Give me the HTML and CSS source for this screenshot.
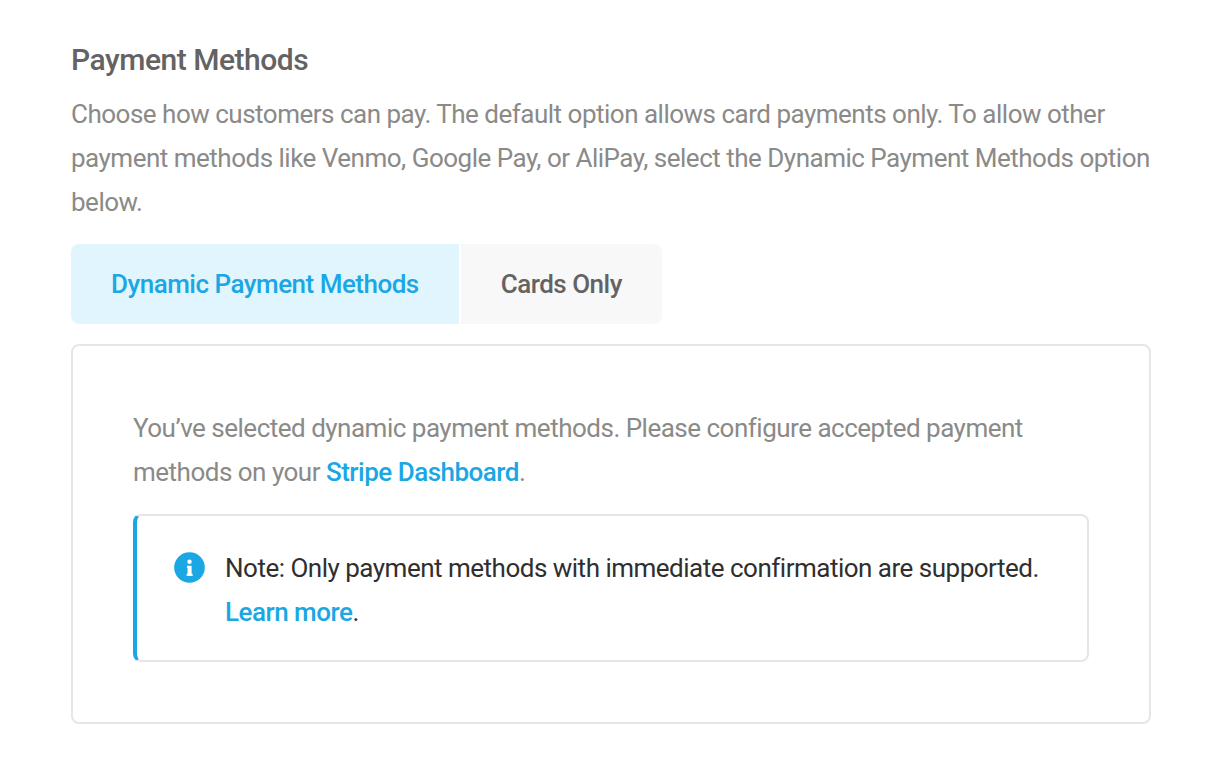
FILE: index.html
```html
<!DOCTYPE html>
<html lang="en">
<head>
  <meta charset="UTF-8">
  <meta name="viewport" content="width=device-width, initial-scale=1.0">
  <title>Payment Methods</title>
  <link rel="stylesheet" href="styles.css">
</head>
<body>
  <div class="container">
    <h2 class="title">Payment Methods</h2>
    <p class="desc">Choose how customers can pay. The default option allows card payments only. To allow other payment methods like Venmo, Google Pay, or AliPay, select the Dynamic Payment Methods option below.</p>
    <div class="tabs">
      <button class="tab active">Dynamic Payment Methods</button>
      <button class="tab">Cards Only</button>
    </div>
    <div class="panel">
      <p class="panel-text">You’ve selected dynamic payment methods. Please configure accepted payment methods on your <a href="#">Stripe Dashboard</a>.</p>
      <div class="note">
        <svg class="note-icon" viewBox="0 0 32 32" aria-hidden="true">
          <circle cx="16" cy="16" r="15.8" fill="#1aa7e3"/>
          <circle cx="16" cy="10" r="2.3" fill="#fff"/>
          <path d="M13.4 14.2h4.8v8.2h1v2.4h-6.2v-2.4h1v-5.8h-.6z" fill="#fff"/>
        </svg>
        <p class="note-text">Note: Only payment methods with immediate confirmation are supported. <a href="#">Learn more</a>.</p>
      </div>
    </div>
  </div>
</body>
</html>
```

FILE: styles.css
```css
body {
  margin: 0;
  background-color: #fff;
  font-family: Roboto, "Liberation Sans", sans-serif;
  color: #8a8a88;
  letter-spacing: -0.5px;
}
.container {
  width: 1080px;
  margin-left: 71px;
  padding-top: 41px;
}
.title {
  margin: 0;
  font-size: 30px;
  line-height: 38px;
  font-weight: 500;
  letter-spacing: -0.47px;
  color: #636363;
}
.desc {
  margin: 0;
  padding-top: 13px;
  font-size: 26px;
  line-height: 44px;
}
.tabs {
  display: flex;
  gap: 2px;
  margin-top: 20px;
}
.tab {
  height: 80px;
  padding: 0 40px;
  border: none;
  background-color: #f8f8f8;
  color: #636363;
  font-family: inherit;
  font-size: 26px;
  font-weight: 500;
  letter-spacing: inherit;
  cursor: pointer;
}
.tab:first-child {
  border-radius: 8px 0 0 8px;
}
.tab:last-child {
  border-radius: 0 8px 8px 0;
}
.tab.active {
  background-color: #e1f5fe;
  color: #1aa7e3;
}
.panel {
  margin-top: 20px;
  padding: 60px;
  border: 2px solid #e6e6e6;
  border-radius: 8px;
}
.panel-text {
  margin: 0;
  font-size: 26px;
  line-height: 44px;
}
a {
  color: #1aa7e3;
  font-weight: 500;
  text-decoration: none;
}
.note {
  display: flex;
  gap: 20px;
  margin-top: 20px;
  padding: 30px 38px 26px;
  border: 2px solid #e6e6e6;
  border-left: 4px solid #1aa7e3;
  border-radius: 8px;
}
.note-icon {
  flex: none;
  width: 31px;
  height: 31px;
  margin-top: 6px;
  margin-left: -1px;
}
.note-text {
  margin: 0;
  font-size: 26px;
  line-height: 44px;
  color: #2f2f2f;
}
```
